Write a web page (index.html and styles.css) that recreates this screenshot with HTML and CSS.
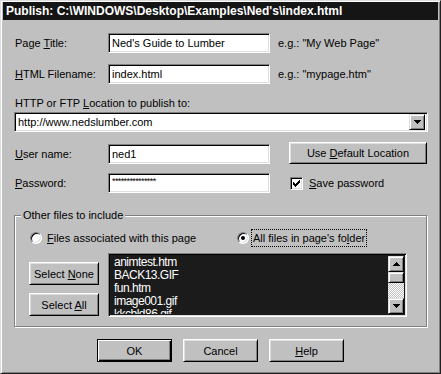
FILE: index.html
```html
<!DOCTYPE html>
<html>
<head>
<meta charset="utf-8">
<link rel="stylesheet" href="styles.css">
</head>
<body>
<div class="window">
  <div class="titlebar">Publish: C:\WINDOWS\Desktop\Examples\Ned's\index.html</div>
  <div class="content">
    <div class="row row-title">
      <span class="lbl">Page <u>T</u>itle:</span>
      <div class="field">Ned's Guide to Lumber</div>
      <span class="hint">e.g.: "My Web Page"</span>
    </div>
    <div class="row row-file">
      <span class="lbl"><u>H</u>TML Filename:</span>
      <div class="field">index.html</div>
      <span class="hint">e.g.: "mypage.htm"</span>
    </div>
    <div class="loc-label">HTTP or FTP <u>L</u>ocation to publish to:</div>
    <div class="combo">
      <span class="combo-text">http://www.nedslumber.com</span>
      <span class="combo-btn arrow-btn"><svg width="7" height="4" viewBox="0 0 7 4"><rect x="0" y="0" width="7" height="1"/><rect x="1" y="1" width="5" height="1"/><rect x="2" y="2" width="3" height="1"/><rect x="3" y="3" width="1" height="1"/></svg></span>
    </div>
    <div class="row row-user">
      <span class="lbl"><u>U</u>ser name:</span>
      <div class="field">ned1</div>
      <div class="btn btn-wide"><span>Use <u>D</u>efault Location</span></div>
    </div>
    <div class="row row-pass">
      <span class="lbl"><u>P</u>assword:</span>
      <div class="field pw">***************</div>
      <div class="check">
        <span class="checkbox"><svg width="7" height="7" viewBox="0 0 7 7"><path d="M0 2h1v1h1v1h1v-1h1v-1h1v-1h1v-1h1v3h-1v1h-1v1h-1v1h-1v1h-1v-1h-1v-1h-1z"/></svg></span>
        <span><u>S</u>ave password</span>
      </div>
    </div>
    <fieldset class="group">
      <legend>Other files to include</legend>
      <div class="group-inner">
        <div class="radios">
          <span class="radio-item r1"><span class="radio"></span><span><u>F</u>iles associated with this page</span></span>
          <span class="radio-item r2"><span class="radio on"></span><span class="focus">All files in page's fo<u>l</u>der</span></span>
        </div>
        <div class="files">
          <div class="sel-btns">
            <div class="btn sel-btn"><span>Select <u>N</u>one</span></div>
            <div class="btn sel-btn"><span>Select <u>A</u>ll</span></div>
          </div>
          <div class="listbox">
            <div class="items">
              <div class="item">animtest.htm</div>
              <div class="item">BACK13.GIF</div>
              <div class="item">fun.htm</div>
              <div class="item">image001.gif</div>
              <div class="item">kkcbld86.gif</div>
            </div>
            <div class="vscroll">
              <span class="arrow-btn"><svg width="7" height="4" viewBox="0 0 7 4"><rect x="3" y="0" width="1" height="1"/><rect x="2" y="1" width="3" height="1"/><rect x="1" y="2" width="5" height="1"/><rect x="0" y="3" width="7" height="1"/></svg></span>
              <span class="thumb"></span>
              <span class="track"></span>
              <span class="arrow-btn"><svg width="7" height="4" viewBox="0 0 7 4"><rect x="0" y="0" width="7" height="1"/><rect x="1" y="1" width="5" height="1"/><rect x="2" y="2" width="3" height="1"/><rect x="3" y="3" width="1" height="1"/></svg></span>
            </div>
          </div>
        </div>
      </div>
    </fieldset>
    <div class="actions">
      <div class="btn act default"><span>OK</span></div>
      <div class="btn act"><span>Cancel</span></div>
      <div class="btn act"><span><u>H</u>elp</span></div>
    </div>
  </div>
</div>
</body>
</html>
```
FILE: styles.css
```css
* { box-sizing: border-box; }
html, body { margin: 0; padding: 0; background: #c0c0c0; }
body {
  font-family: "Liberation Sans", Arial, sans-serif;
  font-size: 11px;
  color: #000;
}
u { text-decoration: underline; text-underline-offset: 1px; }

.window {
  width: 441px;
  height: 374px;
  background: #c0c0c0;
  border: 1px solid;
  border-color: #dcdcdc #202020 #202020 #dcdcdc;
  box-shadow: inset 1px 1px #fff, inset -1px -1px #808080;
  padding: 1px 2px 2px 2px;
}
.titlebar {
  height: 18px;
  line-height: 18px;
  background: #151515;
  color: #fff;
  font-weight: bold;
  font-size: 12px;
  padding-left: 3px;
  white-space: nowrap;
}
.content {
  padding: 0 0 0 11px;
}
.row {
  display: flex;
  align-items: center;
}
.row-title { margin-top: 13px; }
.row-file { margin-top: 11px; }
.row-user { margin-top: 12px; align-items: flex-start; }
.row-pass { margin-top: 9px; }
.lbl {
  width: 94px;
  padding-left: 1px;
  flex: none;
}
.row-user .lbl { line-height: 20px; }
.field, .combo, .listbox {
  border: 1px solid;
  border-color: #808080 #fff #fff #808080;
  box-shadow: inset 1px 1px #000, inset -1px -1px #dfdfdf;
}
.field {
  width: 162px;
  height: 20px;
  background: #fff;
  padding: 0 3px;
  line-height: 18px;
  white-space: nowrap;
  flex: none;
}
.field.pw {
  font-size: 9px;
  line-height: 11px;
  padding-top: 2px;
  letter-spacing: -0.6px;
}
.hint { margin-left: 8px; }
.loc-label {
  margin-top: 12px;
  line-height: 14px;
  padding-left: 1px;
}
.combo {
  margin-top: 2px;
  width: 414px;
  height: 20px;
  background: #fff;
  display: flex;
  align-items: center;
  padding: 2px;
}
.combo-text {
  flex: 1;
  padding-left: 1px;
}
.arrow-btn {
  width: 16px;
  height: 16px;
  flex: none;
  display: flex;
  align-items: center;
  justify-content: center;
  background: #c0c0c0;
  border: 1px solid;
  border-color: #dfdfdf #000 #000 #dfdfdf;
  box-shadow: inset 1px 1px #fff, inset -1px -1px #808080;
}
.arrow-btn svg { fill: #000; display: block; }

.btn {
  background: #c0c0c0;
  border: 1px solid;
  border-color: #fff #000 #000 #fff;
  box-shadow: inset 1px 1px #dfdfdf, inset -1px -1px #808080;
  display: flex;
  align-items: center;
  justify-content: center;
  white-space: nowrap;
}
.btn-wide {
  margin-left: 19px;
  margin-top: -2px;
  width: 138px;
  height: 22px;
}
.check {
  margin-left: 20px;
  display: flex;
  align-items: center;
  gap: 6px;
}
.checkbox {
  width: 13px;
  height: 13px;
  background: #fff;
  border: 1px solid;
  border-color: #808080 #fff #fff #808080;
  box-shadow: inset 1px 1px #000, inset -1px -1px #dfdfdf;
  display: flex;
  align-items: center;
  justify-content: center;
}
.checkbox svg { display: block; fill: #000; }

.group {
  margin: 16px 0 0 0;
  padding: 0;
  width: 413px;
  border: 1px solid #808080;
  box-shadow: 1px 1px #fff, inset 1px 1px #fff;
  min-inline-size: 0;
}
.group legend {
  margin-left: 6px;
  padding: 0 2px;
  line-height: 13px;
  background: #c0c0c0;
  font-size: 11px;
}
.group-inner {
  padding: 8px 0 9px 15px;
}
.radios {
  display: flex;
  align-items: center;
  height: 16px;
}
.radio-item {
  display: flex;
  align-items: center;
}
.r1 { width: 207px; }
.radio {
  width: 12px;
  height: 12px;
  border-radius: 50%;
  background: #fff;
  border: 1px solid;
  border-color: #808080 #fff #fff #808080;
  box-shadow: inset 1px 1px #000, inset -1px -1px #dfdfdf;
  margin-right: 5px;
  display: flex;
  align-items: center;
  justify-content: center;
  flex: none;
}
.r2 .radio { margin-right: 3px; }
.radio.on::after {
  content: "";
  width: 4px;
  height: 4px;
  border-radius: 50%;
  background: #000;
}
.focus {
  outline: 1px dotted #000;
  padding: 1px 1px;
  line-height: 14px;
}
.files {
  display: flex;
  margin-top: 7px;
}
.sel-btns {
  margin-left: -1px;
  padding-top: 9px;
  display: flex;
  flex-direction: column;
  gap: 8px;
}
.sel-btn {
  width: 70px;
  height: 23px;
}
.listbox {
  margin-left: 9px;
  width: 299px;
  height: 64px;
  background: #1b1b1b;
  padding: 2px;
  display: flex;
}
.items {
  flex: 1;
  overflow: hidden;
  color: #fff;
  font-size: 12px;
  letter-spacing: -0.5px;
  padding-left: 3px;
}
.item { line-height: 13px; height: 13px; white-space: nowrap; }
.vscroll {
  width: 16px;
  display: flex;
  flex-direction: column;
}
.thumb {
  height: 11px;
  background: #c0c0c0;
  border: 1px solid;
  border-color: #dfdfdf #000 #000 #dfdfdf;
  box-shadow: inset 1px 1px #fff, inset -1px -1px #808080;
}
.track {
  flex: 1;
  background-image: repeating-conic-gradient(#fff 0 25%, #c0c0c0 0 50%);
  background-size: 2px 2px;
}
.actions {
  margin-top: 12px;
  display: flex;
  justify-content: center;
  gap: 11px;
  padding-right: 11px;
}
.act {
  width: 75px;
  height: 23px;
}
.act.default {
  border: 1px solid #000;
  box-shadow: inset 1px 1px #fff, inset -1px -1px #000, inset -2px -2px #808080;
}
```
